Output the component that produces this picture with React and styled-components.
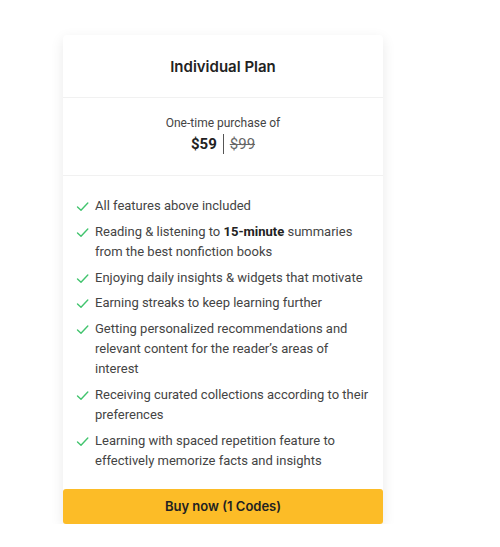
import React from 'react';
import styled, { createGlobalStyle } from 'styled-components';

const GlobalStyle = createGlobalStyle`
  body {
    margin: 0;
    background: #fff;
    font-family: Roboto, "Liberation Sans", sans-serif;
  }
`;

const Page = styled.div`
  padding: 35px 0 0 63px;
`;

const Card = styled.div`
  width: 320px;
  background: #fff;
  border-radius: 4px;
  box-shadow: 0 4px 14px rgba(0, 0, 0, 0.09);
  display: flex;
  flex-direction: column;
`;

const Header = styled.div`
  height: 62px;
  display: flex;
  align-items: center;
  justify-content: center;
  border-bottom: 1px solid #f1f1f1;
  font-family: Inter, Roboto, sans-serif;
  font-size: 15px;
  font-weight: 600;
  color: #222;
`;

const PriceBlock = styled.div`
  height: 78px;
  display: flex;
  flex-direction: column;
  align-items: center;
  justify-content: center;
  border-bottom: 1px solid #f1f1f1;
  padding-bottom: 4px;
  box-sizing: border-box;
`;

const PriceLabel = styled.div`
  font-size: 12px;
  color: #444;
  line-height: 16px;
`;

const PriceRow = styled.div`
  display: flex;
  align-items: center;
  margin-top: 3px;
  font-size: 15px;
  line-height: 20px;
`;

const Price = styled.span`
  font-weight: 700;
  color: #222;
  padding-right: 6px;
  border-right: 1px solid #555;
`;

const OldPrice = styled.span`
  color: #666;
  text-decoration: line-through;
  padding-left: 6px;
`;

const Features = styled.ul`
  list-style: none;
  margin: 0;
  padding: 20px 12px 18px 13px;
  display: flex;
  flex-direction: column;
  gap: 5.8px;
`;

const Feature = styled.li`
  display: flex;
  align-items: flex-start;
  gap: 6px;
  font-size: 13px;
  line-height: 20px;
  color: #444;

  b {
    font-weight: 700;
    color: #222;
  }
`;

const CheckIcon = styled.svg`
  flex: none;
  width: 13px;
  height: 13px;
  margin-top: 4px;
`;

const BuyButton = styled.button`
  height: 35px;
  border: none;
  border-radius: 3px;
  background: #fcbc27;
  font-family: Inter, Roboto, sans-serif;
  font-size: 13px;
  font-weight: 600;
  color: #222;
  cursor: pointer;
`;

const Check = () => (
  <CheckIcon viewBox="0 0 13 13">
    <path d="M1.5 7 L5 10.3 L11.8 3" fill="none" stroke="#42c46e" strokeWidth="1.4" strokeLinecap="round" strokeLinejoin="round" />
  </CheckIcon>
);

const features = [
  'All features above included',
  <>Reading &amp; listening to <b>15-minute</b> summaries from the best nonfiction books</>,
  'Enjoying daily insights & widgets that motivate',
  'Earning streaks to keep learning further',
  'Getting personalized recommendations and relevant content for the reader’s areas of interest',
  'Receiving curated collections according to their preferences',
  'Learning with spaced repetition feature to effectively memorize facts and insights',
];

export default function App() {
  return (
    <Page>
      <GlobalStyle />
      <Card>
        <Header>Individual Plan</Header>
        <PriceBlock>
          <PriceLabel>One-time purchase of</PriceLabel>
          <PriceRow>
            <Price>$59</Price>
            <OldPrice>$99</OldPrice>
          </PriceRow>
        </PriceBlock>
        <Features>
          {features.map((f, i) => (
            <Feature key={i}>
              <Check />
              <span>{f}</span>
            </Feature>
          ))}
        </Features>
        <BuyButton>Buy now (1 Codes)</BuyButton>
      </Card>
    </Page>
  );
}
